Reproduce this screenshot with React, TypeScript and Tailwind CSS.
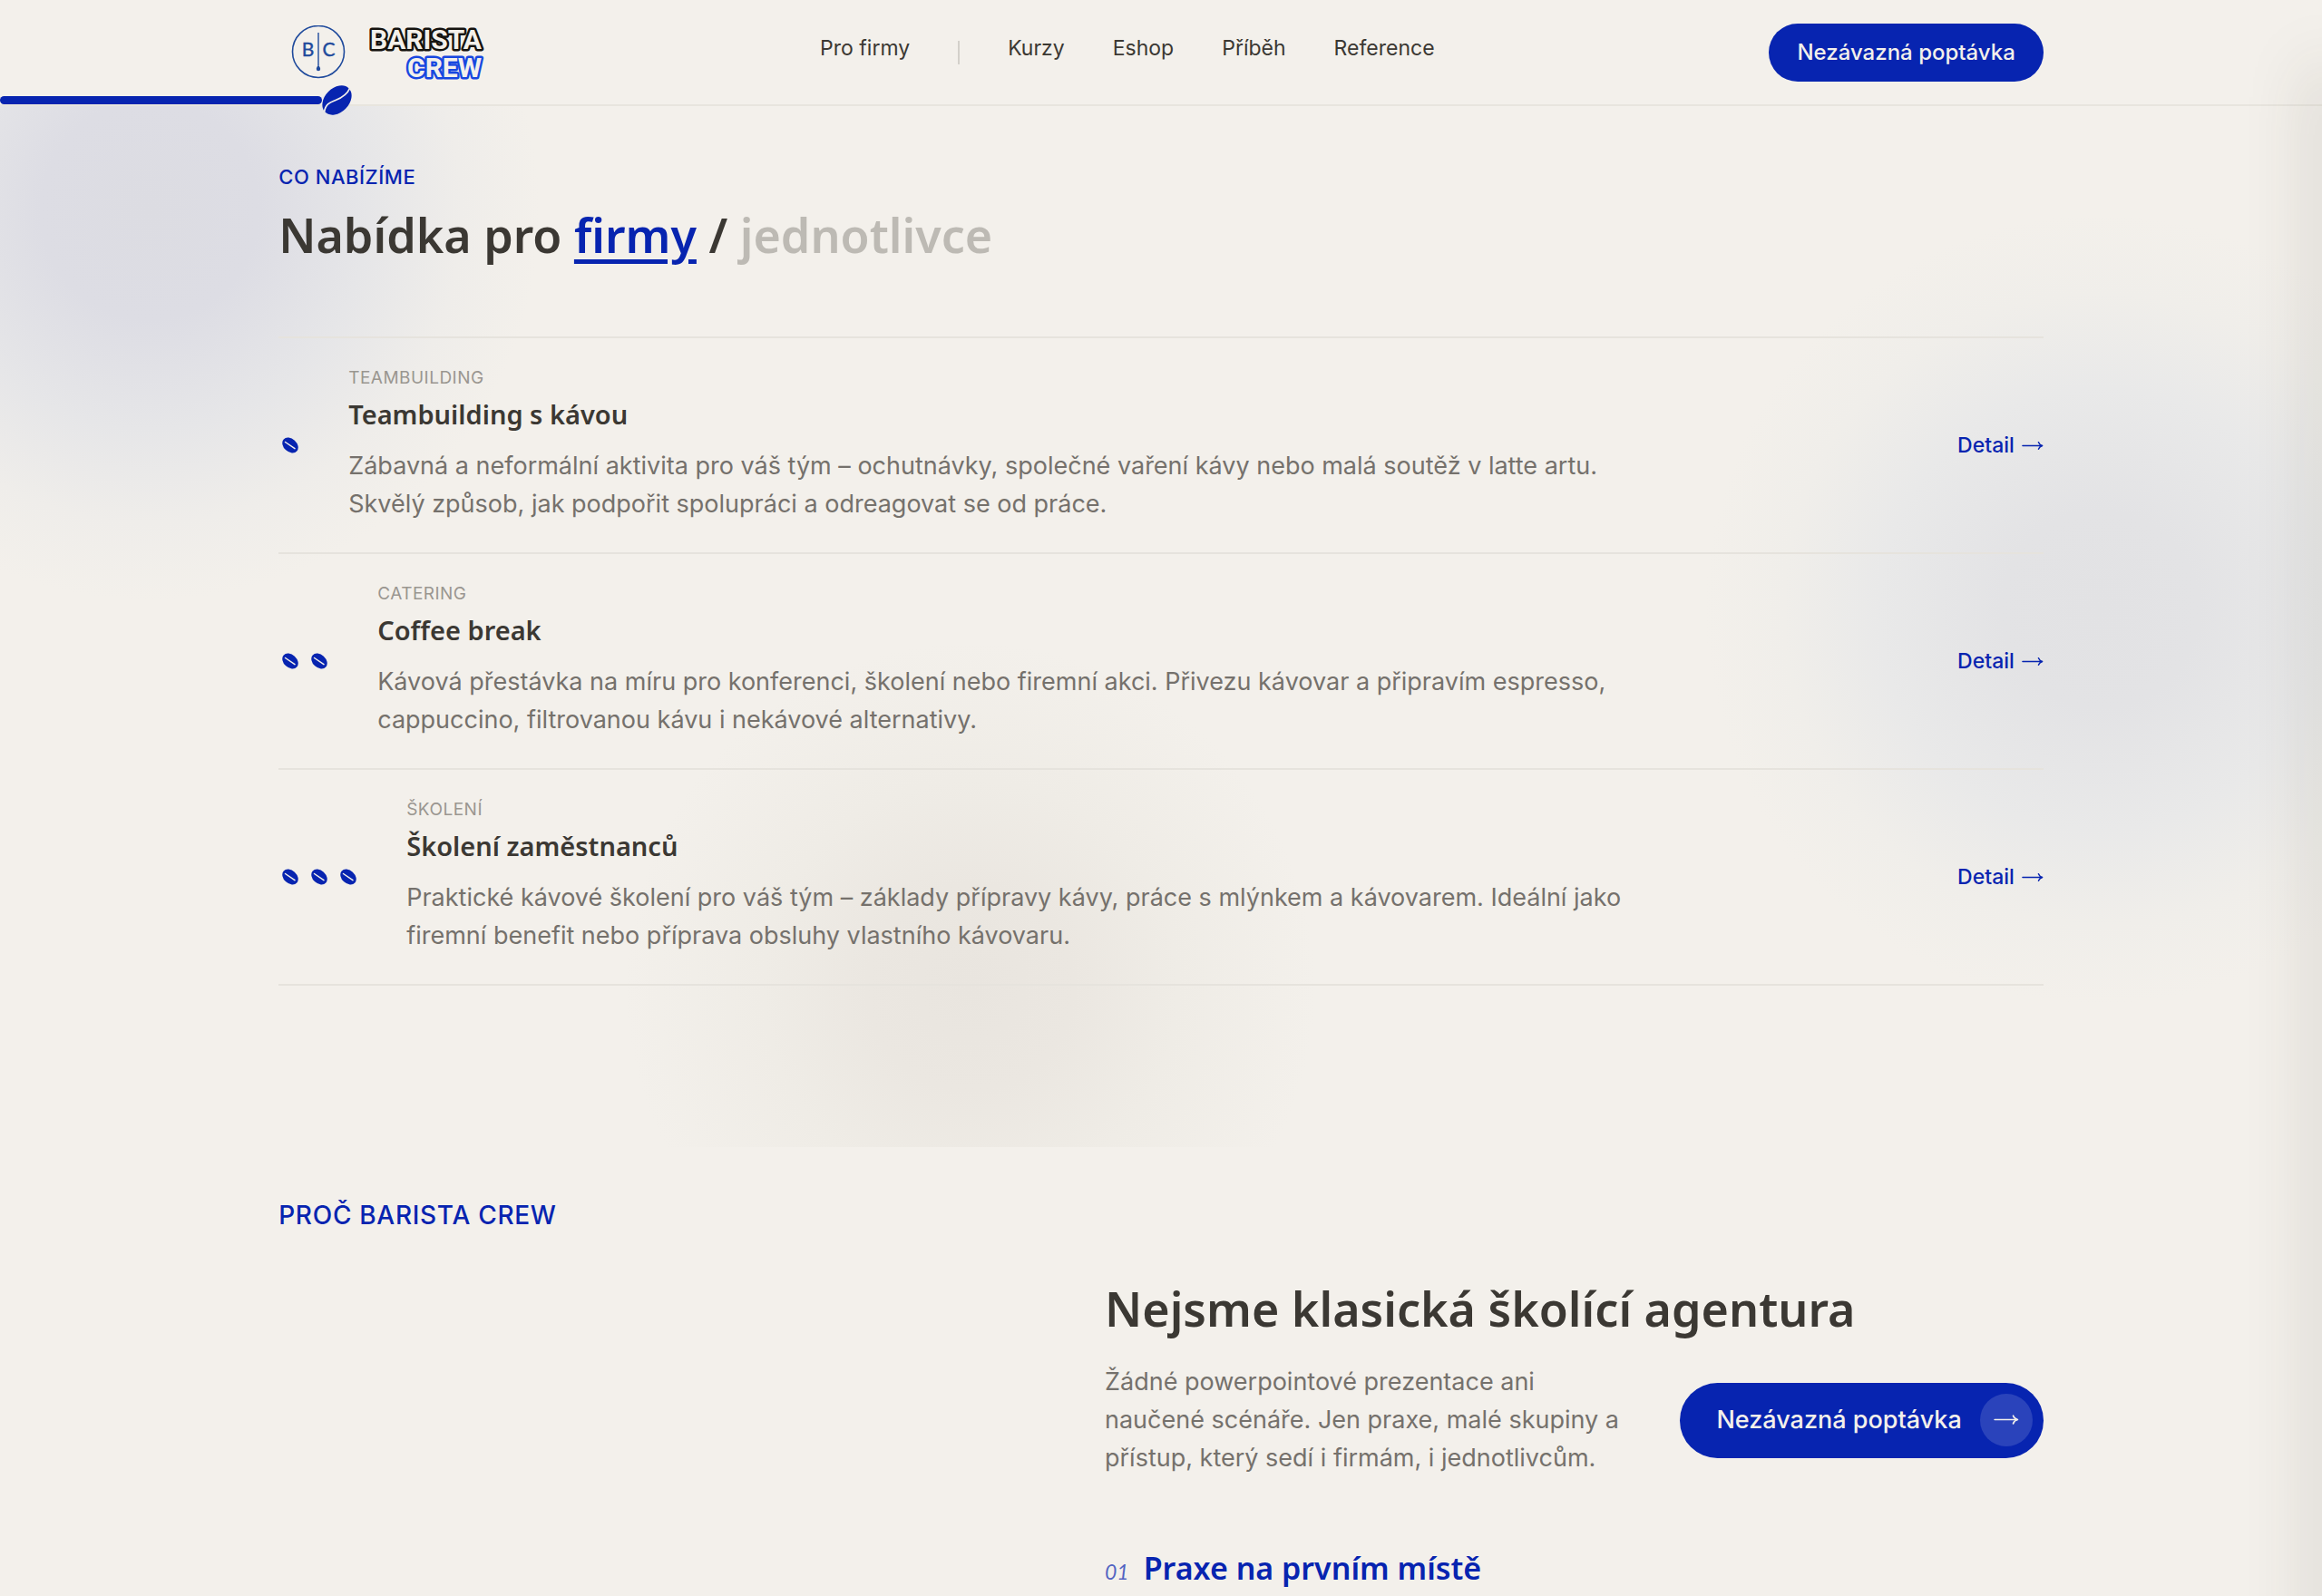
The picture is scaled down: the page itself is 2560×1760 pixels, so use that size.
type Offer = {
  beans: number;
  label: string;
  title: string;
  text: string;
};

const navLinks = ["Kurzy", "Eshop", "Příběh", "Reference"];

const offers: Offer[] = [
  {
    beans: 1,
    label: "Teambuilding",
    title: "Teambuilding s kávou",
    text: "Zábavná a neformální aktivita pro váš tým – ochutnávky, společné vaření kávy nebo malá soutěž v latte artu. Skvělý způsob, jak podpořit spolupráci a odreagovat se od práce.",
  },
  {
    beans: 2,
    label: "Catering",
    title: "Coffee break",
    text: "Kávová přestávka na míru pro konferenci, školení nebo firemní akci. Přivezu kávovar a připravím espresso, cappuccino, filtrovanou kávu i nekávové alternativy.",
  },
  {
    beans: 3,
    label: "Školení",
    title: "Školení zaměstnanců",
    text: "Praktické kávové školení pro váš tým – základy přípravy kávy, práce s mlýnkem a kávovarem. Ideální jako firemní benefit nebo příprava obsluhy vlastního kávovaru.",
  },
];

function Arrow({ className }: { className?: string }) {
  return (
    <svg viewBox="0 0 26 14" fill="none" stroke="currentColor" strokeLinecap="round" strokeLinejoin="round" className={className} aria-hidden="true">
      <path d="M1 7h23" strokeWidth="1.5" />
      <path d="M20 3c.8 2.100 2.200 3.400 4.500 4-2.300.6-3.700 1.900-4.500 4" strokeWidth="1.6" />
    </svg>
  );
}

function SmallBean() {
  return (
    <svg viewBox="0 0 24 24" className="size-6" aria-hidden="true">
      <ellipse cx="13" cy="12" rx="9.8" ry="7.2" transform="rotate(42 13 12)" fill="#0724b0" />
      <path d="M7.5 8.500 18 15.700" stroke="#f3f0eb" strokeWidth="1.5" strokeLinecap="round" />
    </svg>
  );
}

function ScrollProgress() {
  return (
    <div className="absolute bottom-[-12px] left-0 flex w-[388px] items-center" aria-hidden="true">
      <div className="h-[9px] flex-1 rounded-full bg-[#0724b0]" />
      <svg viewBox="0 0 33 33" className="size-[33px]">
        <ellipse cx="16.5" cy="16.5" rx="18.5" ry="13.3" transform="rotate(-45 16.5 16.5)" fill="#0724b0" />
        <path d="M2.5 29.5C4 20 10 18.500 15 16.500S27.500 11 30.500 3.500" fill="none" stroke="#f3f0eb" strokeWidth="1.8" />
      </svg>
    </div>
  );
}

function Logo() {
  return (
    <a href="#" aria-label="Barista Crew" className="flex items-center gap-6 pl-3.5">
      <svg viewBox="0 0 60 60" className="size-[60px]" aria-hidden="true">
        <circle cx="30" cy="29" r="28.5" fill="none" stroke="#1f4a9c" strokeWidth="1.6" />
        <path d="M30 8v36" stroke="#1f4a9c" strokeWidth="1.4" />
        <path d="M30 43.500c1.200 2 2.200 3 2.200 4.500a2.200 2.200 0 0 1-4.400 0c0-1.500 1-2.500 2.200-4.500Z" fill="#1f4a9c" />
        <text x="18.5" y="34" textAnchor="middle" fontFamily="Lato" fontSize="21" fill="#1f4a9c" stroke="#1f4a9c" strokeWidth="0.4">B</text>
        <text x="41.5" y="34" textAnchor="middle" fontFamily="Lato" fontSize="21" fill="#1f4a9c" stroke="#1f4a9c" strokeWidth="0.4">C</text>
      </svg>
      <svg viewBox="0 0 130 66" className="h-[66px] w-[130px]" aria-hidden="true" fontFamily="Roboto" fontWeight="700" fontSize="30" fill="#f3f0eb" strokeWidth="5" strokeLinejoin="round" paintOrder="stroke">
        <text x="126" y="29" textAnchor="end" stroke="#15130f">BARISTA</text>
        <text x="126" y="60" textAnchor="end" stroke="#1747e0">CREW</text>
      </svg>
    </a>
  );
}

function Header() {
  return (
    <header className="relative z-10 border-b-2 border-[#e8e5de] bg-[#f3f0eb]">
      <div className="mx-auto flex h-[115px] w-[76%] items-center justify-between">
        <Logo />
        <nav className="flex items-start gap-[53px] pb-1.5 text-[23px] leading-7 text-[#3b3833]">
          <a href="#firmy">Pro firmy</a>
          <span className="mt-1.5 h-[26px] w-0.5 bg-[#d3d0ca]" />
          {navLinks.map((link) => (
            <a key={link} href="#">{link}</a>
          ))}
        </nav>
        <button type="button" className="h-16 rounded-full bg-[#0724b0] px-[31px] text-[24px] font-medium text-[#f3f0eb]">Nezávazná poptávka</button>
      </div>
      <ScrollProgress />
    </header>
  );
}

function OfferRow({ offer }: { offer: Offer }) {
  return (
    <li className="flex items-center border-b-2 border-[#e6e3dd] py-8">
      <div className="mr-[53px] flex gap-2">
        {Array.from({ length: offer.beans }, (_, i) => (
          <SmallBean key={i} />
        ))}
      </div>
      <div className="w-[1400px]">
        <p className="text-[19px] leading-6 tracking-wide text-[#9a9690] uppercase">{offer.label}</p>
        <h3 className="mt-2 font-['Noto_Sans'] text-[29px] leading-10 font-semibold text-[#3b3833]">{offer.title}</h3>
        <p className="mt-4 text-[27px] leading-[42px] text-[#75716c]">{offer.text}</p>
      </div>
      <a href="#" className="ml-auto flex items-center gap-2 text-[23px] font-medium text-[#0724b0]">
        Detail <Arrow className="w-6" />
      </a>
    </li>
  );
}

function Offers() {
  return (
    <section id="firmy" className="relative overflow-hidden pt-16 pb-[178px]">
      <div className="absolute top-[-315px] left-[-265px] size-[860px] rounded-full bg-[radial-gradient(closest-side,#dcdce2_0%,#dddde4_28%,#e6e6e8_56%,#efedea_80%,#f3f0eb_100%)]" />
      <div className="absolute top-[120px] right-[-190px] size-[870px] rounded-full bg-[radial-gradient(closest-side,#e2e2e4_0%,#e3e3e5_25%,#e9e9e9_56%,#f0eeea_80%,#f3f0eb_100%)]" />
      <div className="absolute bottom-[-204px] left-[690px] size-[760px] rounded-full bg-[radial-gradient(closest-side,#e9e5df_0%,#ebe7e1_30%,#efece6_60%,#f3f0eb_100%)]" />
      <div className="relative mx-auto w-[76%]">
        <p className="text-[22px] leading-7 font-medium tracking-wide text-[#0724b0] uppercase">Co nabízíme</p>
        <h2 className="mt-[18px] font-['Noto_Sans'] text-[52px] leading-[64px] font-semibold text-[#3b3833]">
          Nabídka pro{" "}
          <button type="button" className="text-[#0724b0] underline decoration-[5px] underline-offset-[7px]">firmy</button>
          {" / "}
          <button type="button" className="text-[#bdbab4]">jednotlivce</button>
        </h2>
        <ul className="mt-20 border-t-2 border-[#e6e3dd]">
          {offers.map((offer) => (
            <OfferRow key={offer.title} offer={offer} />
          ))}
        </ul>
      </div>
    </section>
  );
}

function Why() {
  return (
    <section className="mx-auto w-[76%] pt-[55px]">
      <p className="text-[28px] leading-10 font-medium tracking-wide text-[#0724b0] uppercase">Proč Barista Crew</p>
      <div className="mt-[51px] grid grid-cols-[911fr_1035fr]">
        <div className="col-start-2">
          <h2 className="font-['Noto_Sans'] text-[52px] leading-[64px] font-semibold text-[#3b3833]">Nejsme klasická školící agentura</h2>
          <div className="mt-7 flex items-center justify-between">
            <p className="w-[580px] text-[27px] leading-[42px] text-[#75716c]">Žádné powerpointové prezentace ani naučené scénáře. Jen praxe, malé skupiny a přístup, který sedí i firmám, i jednotlivcům.</p>
            <button type="button" className="flex h-[83px] items-center gap-5 rounded-full bg-[#0724b0] pr-3 pl-10 text-[27px] font-medium text-[#f3f0eb]">
              Nezávazná poptávka
              <span className="grid size-[58px] place-items-center rounded-full bg-white/14">
                <Arrow className="w-7" />
              </span>
            </button>
          </div>
          <div className="mt-[78px] flex items-baseline gap-4">
            <span className="font-['Lato'] text-[23px] text-[#0724b0]/70 italic">01</span>
            <h3 className="font-['Noto_Sans'] text-[34px] leading-[44px] font-semibold text-[#0724b0]">Praxe na prvním místě</h3>
          </div>
        </div>
      </div>
    </section>
  );
}

export default function App() {
  return (
    <div className="relative min-h-screen overflow-hidden bg-[#f3f0eb] font-['Inter',sans-serif]">
      <Header />
      <Offers />
      <Why />
      <div className="pointer-events-none absolute top-[80px] -right-2.5 -bottom-24 z-20 w-2.5 shadow-[0_0_70px_6px_rgba(60,55,45,0.25)]" />
    </div>
  );
}
